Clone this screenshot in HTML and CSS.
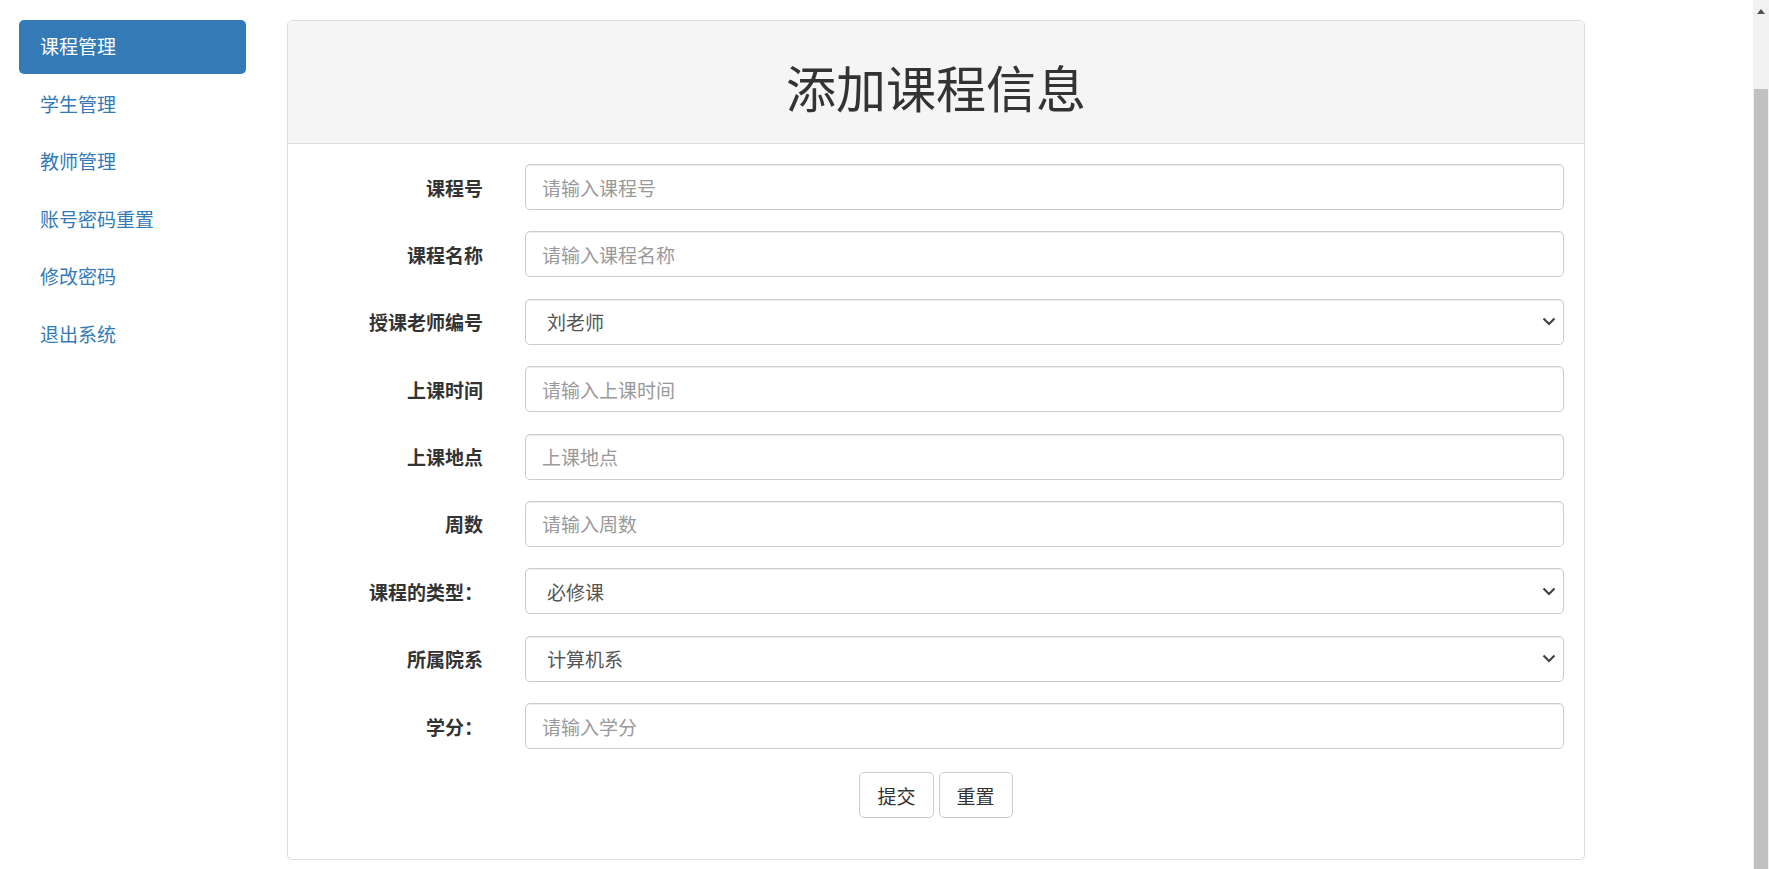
FILE: index.html
```html
<!DOCTYPE html>
<html lang="zh-CN">
<head>
  <meta charset="UTF-8">
  <title>添加课程信息</title>
  <link rel="stylesheet" href="styles.css">
</head>
<body>
  <div class="page">
    <ul class="side-nav">
      <li class="active"><a href="#">课程管理</a></li>
      <li><a href="#">学生管理</a></li>
      <li><a href="#">教师管理</a></li>
      <li><a href="#">账号密码重置</a></li>
      <li><a href="#">修改密码</a></li>
      <li><a href="#">退出系统</a></li>
    </ul>
    <div class="panel">
      <div class="panel-heading"><h1>添加课程信息</h1></div>
      <div class="panel-body">
        <form class="course-form">
          <div class="form-row"><label>课程号</label><input type="text" placeholder="请输入课程号"></div>
          <div class="form-row"><label>课程名称</label><input type="text" placeholder="请输入课程名称"></div>
          <div class="form-row"><label>授课老师编号</label>
            <select><option>刘老师</option><option>王老师</option></select>
          </div>
          <div class="form-row"><label>上课时间</label><input type="text" placeholder="请输入上课时间"></div>
          <div class="form-row"><label>上课地点</label><input type="text" placeholder="上课地点"></div>
          <div class="form-row"><label>周数</label><input type="text" placeholder="请输入周数"></div>
          <div class="form-row"><label>课程的类型：</label>
            <select><option>必修课</option><option>选修课</option></select>
          </div>
          <div class="form-row"><label>所属院系</label>
            <select><option>计算机系</option><option>数学系</option></select>
          </div>
          <div class="form-row"><label>学分：</label><input type="text" placeholder="请输入学分"></div>
          <div class="form-actions">
            <button type="submit" class="btn">提交</button>
            <button type="reset" class="btn">重置</button>
          </div>
        </form>
      </div>
    </div>
  </div>
  <div class="scrollbar"><span class="scroll-up"></span><span class="scroll-thumb"></span></div>
</body>
</html>
```

FILE: styles.css
```css
:root { --blue: #337ab7; --border: #ccc; --font: "Noto Sans CJK SC", "Noto Sans", sans-serif; }
* { box-sizing: border-box; }
body { margin: 0; font-family: var(--font); font-size: 19px; color: #333; background: #fff; }
.page { display: flex; align-items: flex-start; padding-top: 20px; }

.side-nav { list-style: none; margin: 0 0 0 19px; padding: 0; width: 227px; }
.side-nav li + li { margin-top: 3.6px; }
.side-nav a { display: block; padding: 12px 21px 15px; line-height: 27px; color: var(--blue); text-decoration: none; border-radius: 5px; }
.side-nav .active a { background: var(--blue); color: #fff; }

.panel { margin-left: 41px; width: 1298px; border: 1px solid #ddd; border-radius: 5px; box-shadow: 0 1px 1px rgba(0,0,0,0.05); }
.panel-heading { background: #f5f5f5; border-bottom: 1px solid #ddd; border-radius: 4px 4px 0 0; padding: 37.5px 0 29.5px; text-align: center; }
.panel-heading h1 { margin: 0; font-size: 50px; line-height: 55px; font-weight: 400; color: #333; }
.panel-body { padding: 20px; }

.form-row { display: flex; align-items: center; margin-bottom: 21.4px; }
.form-row label { width: 175px; margin-right: 42px; text-align: right; font-weight: 700; line-height: 27px; }
.form-row input, .form-row select { flex: 1; height: 46px; padding: 0 16px; border: 1px solid var(--border); border-radius: 5px; font-family: var(--font); font-size: 19px; color: #555; background-color: #fff; box-shadow: inset 0 1px 1px rgba(0,0,0,0.075); outline: none; }
.form-row input::placeholder { color: #999; }
.form-row select { appearance: none; -webkit-appearance: none; padding-left: 21px; background-image: url("data:image/svg+xml,%3Csvg xmlns='http://www.w3.org/2000/svg' width='14' height='9' viewBox='0 0 14 9'%3E%3Cpath d='M1.5 1.5 7 7l5.5-5.5' fill='none' stroke='%23444' stroke-width='2.2'/%3E%3C/svg%3E"); background-repeat: no-repeat; background-position: right 7px center; }

.form-actions { display: flex; justify-content: center; gap: 5px; margin-bottom: 21px; padding-top: 1.5px; }
.btn { height: 46px; padding: 0 17px; border: 1px solid var(--border); border-radius: 5px; background: #fff; font-family: var(--font); font-size: 19px; color: #333; cursor: pointer; }

/* browser scrollbar strip on the right edge */
.scrollbar { position: fixed; top: 0; right: 0; width: 16px; height: 100%; background: #f1f1f1; display: flex; flex-direction: column; align-items: center; }
.scroll-up { width: 0; height: 0; margin: 9px 0 0; border-left: 4.5px solid transparent; border-right: 4.5px solid transparent; border-bottom: 5px solid #505050; }
.scroll-thumb { width: 14px; margin-top: 75px; flex: 1; background: #c1c1c1; }
```
